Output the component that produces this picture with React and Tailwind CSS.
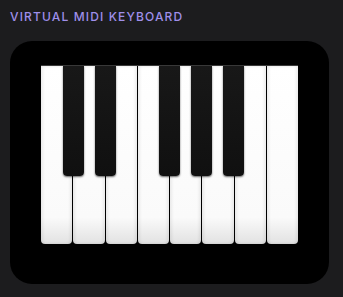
const whites = ["C", "D", "E", "F", "G", "A", "B", "C2"];
const blacks = [22, 54, 118, 150, 182];

function Keyboard() {
  return (
    <div className="relative w-[257px] h-[179px] flex gap-px border-t border-[#3a3a3a]">
      {whites.map((k) => (
        <div
          key={k}
          className="flex-1 h-full rounded-b-[4px] bg-gradient-to-b from-white via-[#fafafa] via-85% to-[#e2e2e2] shadow-[inset_2px_0_3px_rgba(0,0,0,0.07),inset_-2px_0_3px_rgba(0,0,0,0.07)]"
        />
      ))}
      {blacks.map((x) => (
        <div
          key={x}
          className="absolute top-0 w-[21px] h-[110px] rounded-b-[4px] bg-gradient-to-b from-[#181818] to-[#101010] shadow-[0_1px_2px_rgba(0,0,0,0.6)]"
          style={{ left: x }}
        />
      ))}
    </div>
  );
}

export default function App() {
  return (
    <div className="w-[343px] h-[297px] bg-[#1c1c1e] px-[10px] pt-[9px] font-['Inter',sans-serif]">
      <h1 className="text-[12px] leading-[15px] font-medium tracking-[0.095em] text-[#9f8fea]">
        VIRTUAL MIDI KEYBOARD
      </h1>
      <div className="mt-[17px] w-[319px] h-[243px] bg-black rounded-[22px] pl-[31px] pt-[24px]">
        <Keyboard />
      </div>
    </div>
  );
}
